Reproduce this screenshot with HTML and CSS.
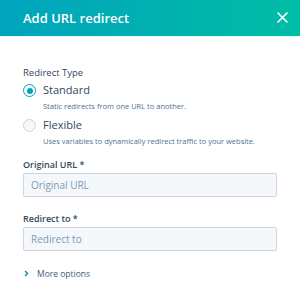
FILE: index.html
```html
<!DOCTYPE html>
<html>
<head>
<meta charset="utf-8">
<link rel="stylesheet" href="styles.css">
</head>
<body>
<div class="panel">
  <header class="header">
    <h1 class="title">Add URL redirect</h1>
    <svg class="close" width="11" height="11" viewBox="0 0 11 11"><path d="M1 1L10 10M10 1L1 10" stroke="#fff" stroke-width="1.6" stroke-linecap="round"/></svg>
  </header>
  <main class="body">
    <div class="group-label">Redirect Type</div>
    <div class="option">
      <span class="radio checked"></span>
      <div class="option-text">
        <div class="option-title">Standard</div>
        <div class="option-desc">Static redirects from one URL to another.</div>
      </div>
    </div>
    <div class="option">
      <span class="radio"></span>
      <div class="option-text">
        <div class="option-title">Flexible</div>
        <div class="option-desc">Uses variables to dynamically redirect traffic to your website.</div>
      </div>
    </div>
    <div class="field">
      <label class="field-label">Original URL *</label>
      <div class="input">Original URL</div>
    </div>
    <div class="field">
      <label class="field-label">Redirect to *</label>
      <div class="input">Redirect to</div>
    </div>
    <div class="more">
      <svg class="chev" width="5" height="7" viewBox="0 0 5 7"><path d="M1 1L3.5 3.5L1 6" fill="none" stroke="#0091ae" stroke-width="1.4"/></svg>
      <span>More options</span>
    </div>
  </main>
</div>
</body>
</html>
```

FILE: styles.css
```css
* { box-sizing: border-box; }
html, body { margin: 0; padding: 0; background: #fff; }
body { font-family: "Open Sans", Lato, sans-serif; color: #33475b; width: 300px; height: 296px; overflow: hidden; }
.panel { width: 300px; }
.header {
  height: 37px;
  background: linear-gradient(90deg, #00a4bd 0%, #00bda5 100%);
  display: flex; align-items: center; justify-content: space-between;
  padding: 0 12px 0 23px;
  border-bottom: 1px solid #e5f5f8;
}
.title { margin: 0; font-size: 13px; font-weight: 600; color: #fff; }
.close { display: block; margin-top: -2px; }
.body { padding: 29px 23px 0 23px; }
.group-label { font-size: 9.5px; line-height: 13px; margin-bottom: 3px; }
.option { display: flex; align-items: flex-start; gap: 7px; margin-bottom: 5px; }
.radio {
  width: 13px; height: 13px; border-radius: 50%;
  border: 1px solid #cbd6e2; background: #f5f8fa; margin-top: 2px; flex: none;
  display: flex; align-items: center; justify-content: center;
}
.radio.checked { border: 1.5px solid #00a4bd; background: #fff; }
.radio.checked::after { content: ""; width: 6px; height: 6px; border-radius: 50%; background: #00a4bd; }
.option-title { font-size: 11px; line-height: 16px; }
.option-desc { font-size: 7.5px; line-height: 11px; color: #516f90; margin-top: 3px; }
.field { margin-top: 12px; }
.field + .field { margin-top: 16px; }
.field-label { display: block; font-size: 9px; line-height: 12px; margin-bottom: 2px; font-weight: 600; }
.input {
  height: 24px; background: #f5f8fa; border: 1px solid #cbd6e2; border-radius: 2px;
  padding: 0 7px; display: flex; align-items: center; font-size: 10px; color: #7c98b6;
}
.more { display: flex; align-items: center; gap: 8px; margin-top: 17px; font-size: 8.5px; color: #425b76; }
.chev { display: block; margin-left: 1px; }
```
